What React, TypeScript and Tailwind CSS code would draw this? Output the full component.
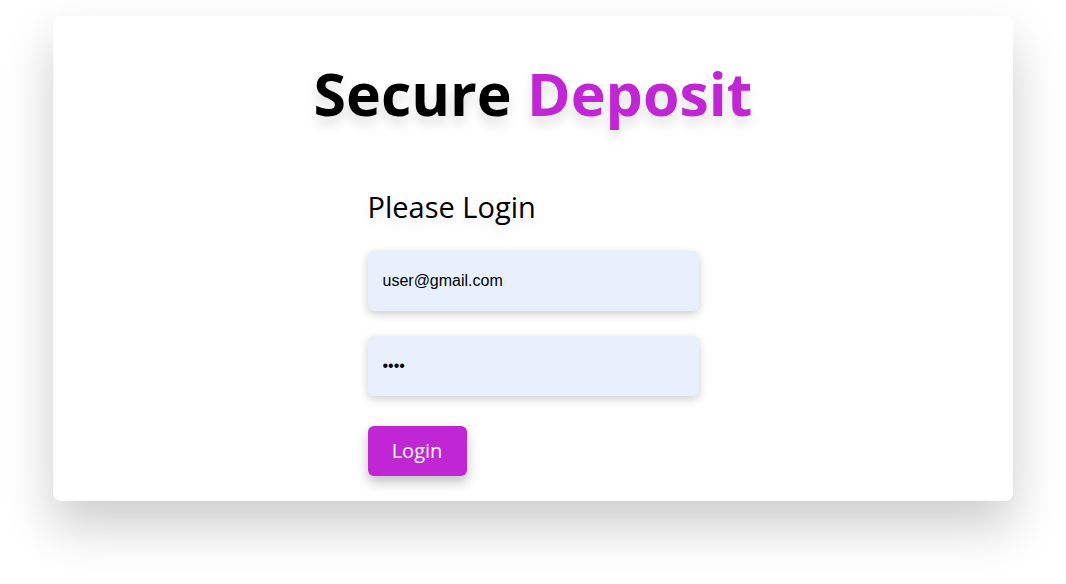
export default function App() {
  return (
    <div className="min-h-screen bg-white pt-4 font-['Open_Sans',sans-serif]">
      <div className="mx-auto w-[960px] rounded-lg bg-white pb-[25px] shadow-[0_25px_50px_rgba(0,0,0,0.2)]">
        <h1 className="pt-[37px] text-center text-[59px] leading-[80px] font-bold text-black [text-shadow:0_8px_12px_rgba(0,0,0,0.12)]">
          Secure <span className="text-[#c026d3]">Deposit</span>
        </h1>
        <form className="mx-auto mt-[54px] flex w-[331px] flex-col" onSubmit={(e) => e.preventDefault()}>
          <h2 className="text-[29px] leading-[40px] text-black [text-shadow:0_6px_10px_rgba(0,0,0,0.1)]">
            Please Login
          </h2>
          <input
            className="mt-[24px] h-[60px] rounded-md bg-[#e8f0fe] px-[15px] font-['Liberation_Sans',sans-serif] text-base text-black shadow-[0_3px_10px_rgba(0,0,0,0.2)] outline-none"
            defaultValue="user@gmail.com"
            type="email"
          />
          <input
            className="mt-[25px] h-[60px] rounded-md bg-[#e8f0fe] px-[15px] font-['Liberation_Sans',sans-serif] text-base text-black shadow-[0_3px_10px_rgba(0,0,0,0.2)] outline-none"
            defaultValue="1234"
            type="password"
          />
          <button
            className="mt-[30px] h-[50px] w-[99px] rounded-md bg-[#c026d3] text-xl text-white shadow-[0_6px_12px_rgba(0,0,0,0.25)]"
            type="submit"
          >
            Login
          </button>
        </form>
      </div>
    </div>
  );
}
